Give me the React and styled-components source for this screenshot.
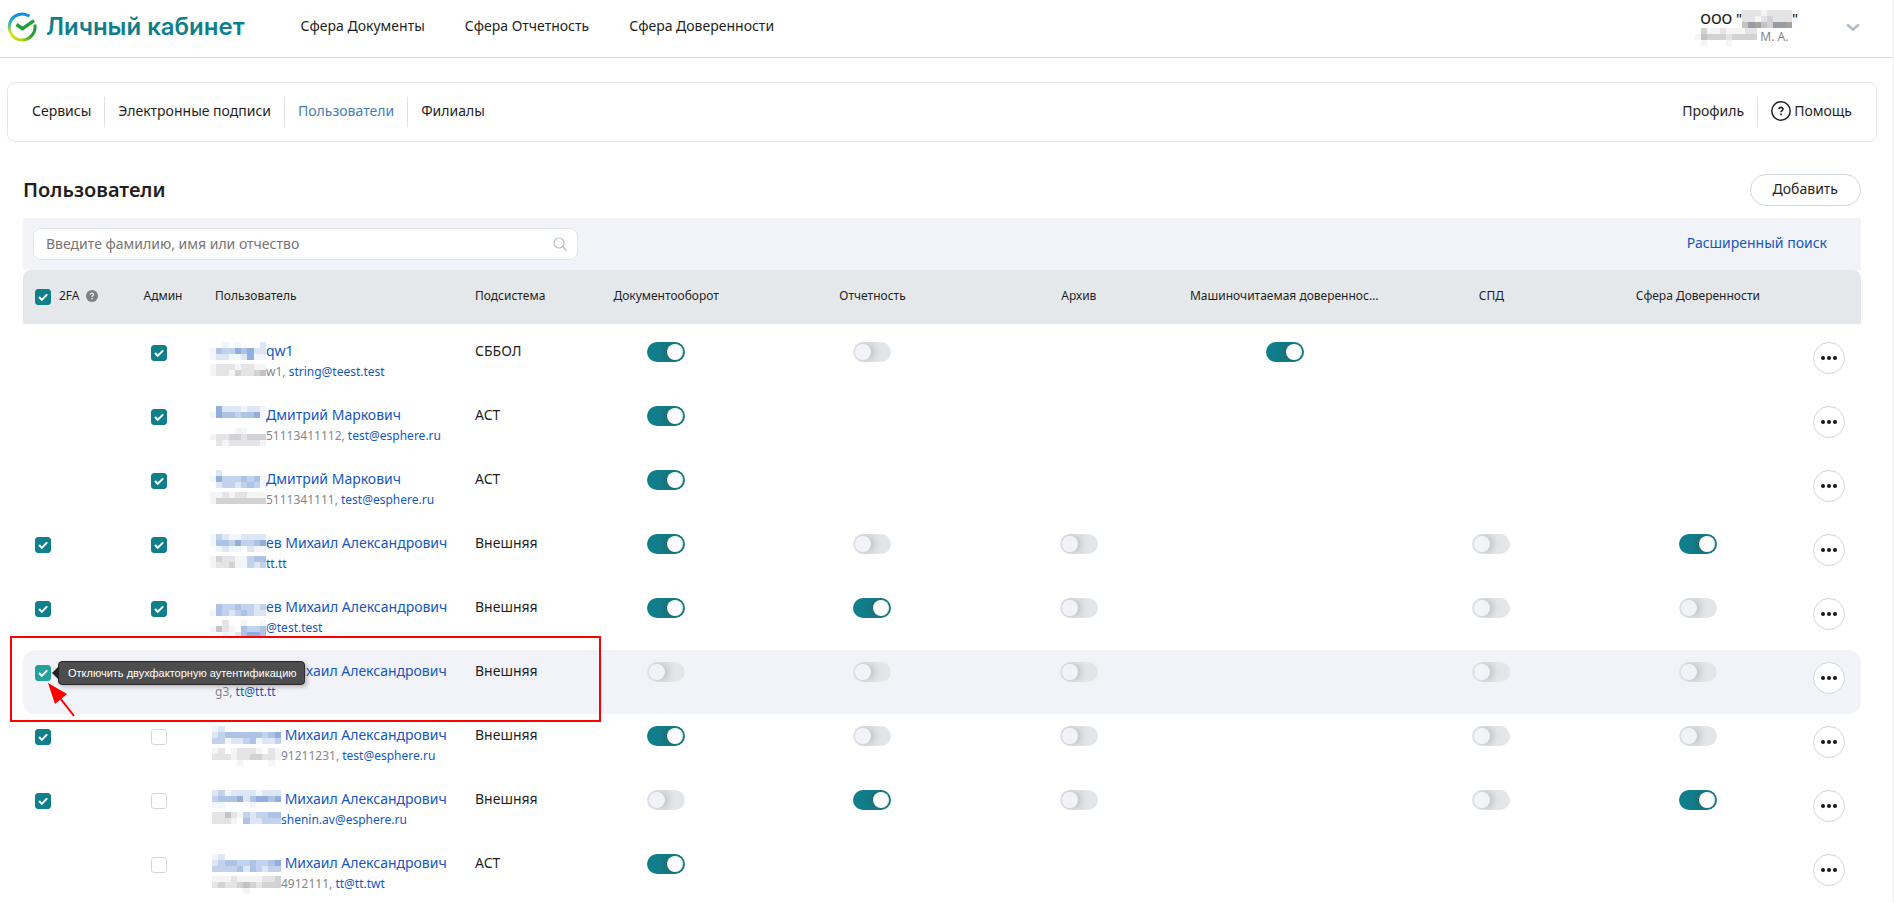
import React, { useState } from 'react';
import styled, { createGlobalStyle } from 'styled-components';

const GlobalStyle = createGlobalStyle`
  * {
    box-sizing: border-box;
  }

  body {
    margin: 0;
    color: #1f1f22;
    background: #fff;
    font-family: 'Noto Sans', 'Open Sans', sans-serif;
    font-size: 14px;
    line-height: 20px;
  }

  a {
    text-decoration: none;
  }

  button, input {
    font-family: inherit;
    font-size: inherit;
  }
`;

const Page = styled.div`
  height: 100vh;
  overflow-y: auto;
  scrollbar-width: none;
  border-right: 1px solid #f0f0f2;
`;

// HEADER

const Header = styled.header`
  display: flex;
  align-items: center;
  height: 58px;
  padding: 0 33px 4px 7px;
  border-bottom: 1px solid #d0d7dd;
`;

const Logo = styled.a`
  display: flex;
  align-items: center;
  gap: 9px;
  margin-right: 56px;
  color: #107f8c;
  font-family: Inter, sans-serif;
  font-size: 24px;
  font-weight: 600;
  line-height: 30px;
`;

const HeaderNav = styled.nav`
  display: flex;
  flex: 1;
  gap: 40px;
  padding-bottom: 2px;
`;

const HeaderLink = styled.a`
  color: #1f1f22;
`;

const Account = styled.button`
  display: flex;
  align-items: center;
  gap: 48px;
  padding: 2px 0 0;
  border: 0;
  background: none;
  color: #1f1f22;
  text-align: left;
`;

const Company = styled.div`
  padding-left: 5px;
  font-weight: 500;
  line-height: 18px;
`;

const Person = styled.div`
  color: #85878c;
  font-size: 12px;
  line-height: 18px;
`;

// SECTIONS

const Sections = styled.nav`
  display: flex;
  align-items: center;
  margin: 24px 16px 0 7px;
  padding: 14px 11px;
  border: 1px solid #e4e6e8;
  border-radius: 8px;
`;

const SectionLink = styled.a`
  display: flex;
  align-items: center;
  gap: 3px;
  height: 30px;
  padding: 0 13px 2px;
  color: ${(props) => (props.$active ? '#4480b8' : '#1f1f22')};

  & + & {
    border-left: 1px solid #dfe2e5;
  }
`;

const Spacer = styled.div`
  flex: 1;
`;

// CONTENT

const Main = styled.main`
  padding: 32px 32px 0 23px;
`;

const TitleRow = styled.div`
  display: flex;
  align-items: center;
  justify-content: space-between;
  margin-bottom: 12px;
`;

const Title = styled.h1`
  margin: 0;
  font-size: 20px;
  font-weight: 600;
  line-height: 28px;
`;

const AddButton = styled.button`
  height: 32px;
  padding: 0 22px 4px;
  border: 1px solid #d0d7dd;
  border-radius: 16px;
  background: #fff;
  color: #1f1f22;
`;

const Filters = styled.div`
  display: flex;
  align-items: center;
  justify-content: space-between;
  padding: 10px 34px 10px 10px;
  background: #f2f3f8;
`;

const SearchBox = styled.label`
  display: flex;
  align-items: center;
  width: 545px;
  height: 32px;
  padding: 0 10px 0 12px;
  border: 1px solid #e3e6e9;
  border-radius: 8px;
  background: #fff;
`;

const SearchInput = styled.input`
  flex: 1;
  padding: 0 0 2px;
  border: 0;
  outline: 0;

  &::placeholder {
    color: #757575;
  }
`;

const BlueLink = styled.a`
  color: #1358bf;
`;

const AdvancedLink = styled(BlueLink)`
  padding-bottom: 2px;
`;

// TABLE

const Table = styled.table`
  width: 100%;
  table-layout: fixed;
  border-collapse: separate;
  border-spacing: 0;
`;

const Col = styled.col`
  width: ${(props) => props.$width}px;
`;

const HeadCell = styled.th`
  height: 54px;
  padding: 0 ${(props) => (props.$center ? '8px' : '12px')} 2px;
  overflow: hidden;
  background: #e4e8eb;
  font-size: 12px;
  font-weight: 400;
  text-align: ${(props) => (props.$center ? 'center' : 'left')};
  text-overflow: ellipsis;
  white-space: nowrap;

  &:first-child {
    border-top-left-radius: 8px;
  }

  &:last-child {
    border-top-right-radius: 8px;
  }
`;

const Factor = styled.div`
  display: flex;
  align-items: center;
  gap: 6px;
`;

const TopGap = styled.tbody`
  td {
    height: 6px;
    padding: 0;
  }
`;

const Row = styled.tr`
  background: ${(props) => (props.$active ? '#f2f3f8' : 'transparent')};
`;

const Cell = styled.td`
  position: relative;
  height: 64px;
  padding: 12px;
  line-height: 18px;
  vertical-align: top;
  text-align: ${(props) => (props.$center ? 'center' : 'left')};
  white-space: nowrap;

  &:first-child {
    border-radius: 12px 0 0 12px;
  }

  &:last-child {
    border-radius: 0 12px 12px 0;
  }
`;

const Name = styled.div`
  height: 20px;
`;

const Details = styled.div`
  height: 20px;
  color: #85878c;
  font-size: 12px;
  line-height: 20px;
`;

const Box = styled.label`
  display: inline-grid;
  margin: ${(props) => (props.$head ? '2px 2px 0 0' : '3px 8px 0 0')};
  vertical-align: top;

  input, svg {
    grid-area: 1 / 1;
  }

  svg {
    pointer-events: none;
  }

  input {
    width: 16px;
    height: 16px;
    margin: 0;
    appearance: none;
    border: 1px solid #d0d7dd;
    border-radius: 3px;
    background: #fff;
  }

  input:checked {
    border-color: ${(props) => (props.$active ? '#21a19a' : '#107f8c')};
    background: ${(props) => (props.$active ? '#21a19a' : '#107f8c')};
  }
`;

const Toggle = styled.input`
  display: block;
  width: 38px;
  height: 20px;
  margin: 0 auto;
  padding: 2px;
  overflow: hidden;
  appearance: none;
  border-radius: 10px;
  background: #e2e6e9;

  &::before {
    content: '';
    display: block;
    width: 16px;
    height: 16px;
    border-radius: 50%;
    background: #f2f3f8;
    box-shadow: 3px 0 8px rgba(0, 0, 0, 0.2);
  }

  &:checked {
    background: #107f8c;
  }

  &:checked::before {
    margin-left: 18px;
    background: #fff;
    box-shadow: -3px 0 8px rgba(60, 60, 60, 0.4);
  }
`;

const MoreButton = styled.button`
  display: flex;
  align-items: center;
  justify-content: center;
  width: 32px;
  height: 32px;
  padding: 0;
  border: 1px solid #d0d7dd;
  border-radius: 50%;
  background: #fff;
`;

const Tooltip = styled.div`
  position: absolute;
  z-index: 2;
  top: 11px;
  left: 35px;
  height: 24px;
  padding: 0 7px 0 9px;
  border: 1px solid #2a2a2a;
  border-radius: 4px;
  background: #4d4d4d;
  box-shadow: 2px 2px 4px rgba(0, 0, 0, 0.25);
  color: #fff;
  font-family: 'Liberation Sans', Arial, sans-serif;
  font-size: 11px;
  line-height: 22px;

  &::before {
    content: '';
    position: absolute;
    top: 4px;
    left: -7px;
    border: 7px solid transparent;
    border-left: 0;
    border-right-color: #222;
  }
`;

const Frame = styled.div`
  position: absolute;
  z-index: 3;
  top: -14px;
  left: -13px;
  width: 591px;
  height: 86px;
  padding: 43px 34px 0;
  border: 2px solid #fe0000;
  pointer-events: none;

  svg {
    display: block;
  }
`;

const Blocks = styled.svg`
  height: 18px;
  margin-left: ${(props) => props.$shift}px;
  vertical-align: top;

  ${Details} & {
    margin-top: 2px;
  }
`;

const shades = {
  a: '#f1f5fc',
  b: '#dde6f4',
  c: '#c2d2ed',
  d: '#adc3e6',
  e: '#92aedd',
  g: '#f5f4f5',
  h: '#e4e4e6',
  i: '#d2d2d5',
  j: '#c4c2c5',
  k: '#9a9aa3',
  l: '#a8a29e',
};

// covers the private part of a name or a login
const Mosaic = ({ rows, width, shift = 0 }) => {
  const cols = rows[0].length;

  return (
    <Blocks
      $shift={shift}
      width={width}
      viewBox={`0 0 ${cols} 3`}
      preserveAspectRatio='none'
      shapeRendering='crispEdges'
      aria-hidden='true'
    >
      {rows.map((row, y) =>
        row
          .split('')
          .map((c, x) =>
            shades[c] ? (
              <rect key={`${x}-${y}`} x={x} y={y} width='1' height='1' fill={shades[c]} />
            ) : null
          )
      )}
    </Blocks>
  );
};

const CheckBox = ({ label, checked, active, head }) => {
  const [on, setOn] = useState(checked);

  return (
    <Box $active={active} $head={head}>
      <input
        type='checkbox'
        aria-label={label}
        checked={on}
        onChange={(e) => setOn(e.target.checked)}
      />
      {on && (
        <svg width='16' height='16' viewBox='0 0 16 16'>
          <path d='M4 8l2.8 2.8L12.2 5.4' fill='none' stroke='#fff' strokeWidth='2' />
        </svg>
      )}
    </Box>
  );
};

const columns = [
  'Документооборот',
  'Отчетность',
  'Архив',
  'Машиночитаемая доверенность',
  'СПД',
  'Сфера Доверенности',
];

// switches: 1 is on, 0 is off, a space leaves the cell empty
const users = [
  {
    admin: true,
    nameMask: ['..a.a...b', 'adccedebb', 'abbaabeaa'],
    name: 'qw1',
    loginMask: ['ghhhghhgg', 'ghhgihhij', '.........'],
    login: 'w1, ',
    email: 'string@teest.test',
    system: 'СББОЛ',
    switches: '10 1  ',
  },
  {
    admin: true,
    nameMask: ['.ebbbabba', 'aeddcddea', '.........'],
    name: 'Дмитрий Маркович',
    loginMask: ['....gg...', 'ghhiihiii', '.hghhhhhg'],
    login: '51113411112, ',
    email: 'test@esphere.ru',
    system: 'АСТ',
    switches: '1     ',
  },
  {
    admin: true,
    nameMask: ['.b.......', 'aecccdcda', '.bccbcdca'],
    name: 'Дмитрий Маркович',
    loginMask: ['gghghhggg', 'giiiiiiii', '.........'],
    login: '5111341111, ',
    email: 'test@esphere.ru',
    system: 'АСТ',
    switches: '1     ',
  },
  {
    factor: true,
    admin: true,
    nameMask: ['acbaabbbb', 'addceccde', '.abaa.bag'],
    name: 'ев Михаил Александрович',
    loginMask: ['gihhgacdd', 'ghhigacbc', '.........'],
    email: 'tt.tt',
    system: 'Внешняя',
    switches: '100 01',
  },
  {
    factor: true,
    admin: true,
    nameMask: ['.........', '.dccdccbc', 'adcbcdcbb'],
    name: 'ев Михаил Александрович',
    loginMask: ['..h..g..a', 'gjhg.dccd', '..g.bdeed'],
    email: '@test.test',
    system: 'Внешняя',
    switches: '110 00',
  },
  {
    factor: true,
    active: true,
    nameMask: ['...........'],
    name: ' Михаил Александрович',
    login: 'g3, ',
    email: 'tt@tt.tt',
    system: 'Внешняя',
    switches: '000 00',
  },
  {
    factor: true,
    admin: false,
    nameMask: ['ab.........', 'bcddddddcde', 'ccabbcdabbc'],
    name: ' Михаил Александрович',
    loginMask: ['gh.ghhhg.hg', 'hhhghhiihhg', '....g....g.'],
    login: '91211231, ',
    email: 'test@esphere.ru',
    system: 'Внешняя',
    switches: '100 00',
  },
  {
    factor: true,
    admin: false,
    nameMask: ['bcabbbbabbb', 'cdddebdeede', 'aa....a....'],
    name: ' Михаил Александрович',
    loginMask: ['hhjhgcbccdd', 'hhhg.dbbccc', '...........'],
    email: 'shenin.av@esphere.ru',
    system: 'Внешняя',
    switches: '010 01',
  },
  {
    admin: false,
    nameMask: ['ab.........', 'bcddccdccde', 'ccccdbdcbcc'],
    name: ' Михаил Александрович',
    loginMask: ['ggghgggghhi', 'hihhijihiii', '.....g.....'],
    login: '4912111, ',
    email: 'tt@tt.twt',
    system: 'АСТ',
    switches: '1     ',
  },
];

const maskSize = (rows) =>
  rows[0].length > 9 ? { width: 69, shift: -3 } : { width: 56, shift: -5 };

const UserRow = ({ user }) => (
  <Row $active={user.active}>
    <Cell>
      {user.factor && (
        <CheckBox label='Двухфакторная аутентификация' checked active={user.active} />
      )}
      {user.active && (
        <>
          <Tooltip role='tooltip'>Отключить двухфакторную аутентификацию</Tooltip>
          <Frame>
            <svg width='30' height='38' viewBox='0 0 30 38' aria-hidden='true'>
              <path d='M14 17l14 18' stroke='#fe0000' strokeWidth='2' />
              <path d='M2 2l19 11-12 10z' fill='#fe0000' />
            </svg>
          </Frame>
        </>
      )}
    </Cell>
    <Cell $center>
      {user.admin !== undefined && <CheckBox label='Админ' checked={user.admin} />}
    </Cell>
    <Cell>
      <Name>
        <BlueLink href='#'>
          <Mosaic rows={user.nameMask} {...maskSize(user.nameMask)} />
          {user.name}
        </BlueLink>
      </Name>
      <Details>
        {user.loginMask && <Mosaic rows={user.loginMask} {...maskSize(user.loginMask)} />}
        {user.login}
        <BlueLink href='#'>{user.email}</BlueLink>
      </Details>
    </Cell>
    <Cell>{user.system}</Cell>
    {columns.map((column, i) => (
      <Cell key={column} $center>
        {user.switches[i] !== ' ' && (
          <Toggle
            type='checkbox'
            role='switch'
            aria-label={column}
            defaultChecked={user.switches[i] === '1'}
          />
        )}
      </Cell>
    ))}
    <Cell>
      <MoreButton aria-label='Действия'>
        <svg width='16' height='4' viewBox='0 0 16 4' fill='#1a1523'>
          <circle cx='2' cy='2' r='2' />
          <circle cx='8' cy='2' r='2' />
          <circle cx='14' cy='2' r='2' />
        </svg>
      </MoreButton>
    </Cell>
  </Row>
);

const LogoIcon = () => (
  <svg width='30' height='30' viewBox='0 0 30 30' fill='none' aria-hidden='true'>
    <defs>
      <linearGradient id='left' x1='0' y1='0' x2='0' y2='1'>
        <stop offset='0' stopColor='#0d8df0' />
        <stop offset='0.35' stopColor='#2fb5b0' />
        <stop offset='0.75' stopColor='#e8e311' />
        <stop offset='1' stopColor='#b9d916' />
      </linearGradient>
      <linearGradient id='right' x1='0' y1='1' x2='1' y2='0'>
        <stop offset='0' stopColor='#a8d31b' />
        <stop offset='0.5' stopColor='#21a038' />
        <stop offset='1' stopColor='#21a038' />
      </linearGradient>
    </defs>
    <path d='M22.5 4.2A13 13 0 1 0 15 28' stroke='url(#left)' strokeWidth='3' />
    <path d='M15 28A13 13 0 0 0 27.8 12.5' stroke='url(#right)' strokeWidth='3' />
    <path d='M9.5 12.5l6 4.2L27 8.6' stroke='#21a038' strokeWidth='3.4' />
  </svg>
);

const App = () => (
  <Page>
    <GlobalStyle />
    <Header>
      <Logo href='#'>
        <LogoIcon />
        Личный кабинет
      </Logo>
      <HeaderNav>
        <HeaderLink href='#'>Сфера Документы</HeaderLink>
        <HeaderLink href='#'>Сфера Отчетность</HeaderLink>
        <HeaderLink href='#'>Сфера Доверенности</HeaderLink>
      </HeaderNav>
      <Account>
        <div>
          <Company>
            ООО "
            <Mosaic rows={['hhhghhhh', 'hhghihhh', 'jkljikkl']} width={50} />"
          </Company>
          <Person>
            <Mosaic rows={['.igghggghh', 'gjiiihiiii', '.g...g....']} width={62} /> М. А.
          </Person>
        </div>
        <svg width='14' height='9' viewBox='0 0 14 9' fill='none' aria-hidden='true'>
          <path d='M1 1.5l6 5 6-5' stroke='#b3bcc5' strokeWidth='2.6' />
        </svg>
      </Account>
    </Header>
    <Sections>
      <SectionLink href='#'>Сервисы</SectionLink>
      <SectionLink href='#'>Электронные подписи</SectionLink>
      <SectionLink href='#' $active>Пользователи</SectionLink>
      <SectionLink href='#'>Филиалы</SectionLink>
      <Spacer />
      <SectionLink href='#'>Профиль</SectionLink>
      <SectionLink href='#'>
        <svg width='20' height='20' viewBox='0 0 20 20' fill='none' aria-hidden='true'>
          <circle cx='10' cy='10' r='9.2' stroke='#1f1f22' strokeWidth='1.5' />
          <path
            d='M8 8.2c0-2.4 4-2.4 4-.1 0 1.5-2 1.5-2 3.2M10 12.6v1.6'
            stroke='#1f1f22'
            strokeWidth='1.6'
          />
        </svg>
        Помощь
      </SectionLink>
    </Sections>
    <Main>
      <TitleRow>
        <Title>Пользователи</Title>
        <AddButton>Добавить</AddButton>
      </TitleRow>
      <Filters>
        <SearchBox>
          <SearchInput
            type='text'
            aria-label='Поиск'
            placeholder='Введите фамилию, имя или отчество'
          />
          <svg width='14' height='14' viewBox='0 0 14 14' fill='none' aria-hidden='true'>
            <circle cx='6' cy='6' r='5' stroke='#b7bfc7' strokeWidth='1.2' />
            <path d='M9.6 9.6l3.8 3.8' stroke='#b7bfc7' strokeWidth='1.4' />
          </svg>
        </SearchBox>
        <AdvancedLink href='#'>Расширенный поиск</AdvancedLink>
      </Filters>
      <Table>
        <colgroup>
          <Col $width={100} />
          <Col $width={80} />
          <Col $width={260} />
          <Col $width={100} />
          {columns.map((column) => (
            <col key={column} />
          ))}
          <Col $width={60} />
        </colgroup>
        <thead>
          <tr>
            <HeadCell>
              <Factor>
                <CheckBox label='2FA' checked head />
                2FA
                <svg width='12' height='12' viewBox='0 0 12 12' aria-hidden='true'>
                  <circle cx='6' cy='6' r='6' fill='#7d7f86' />
                  <path
                    d='M4.4 4.8c0-2.2 3.2-2.2 3.2-.2 0 1.2-1.6 1.2-1.6 2.4M6 8v1.4'
                    fill='none'
                    stroke='#e4e8eb'
                    strokeWidth='1.3'
                  />
                </svg>
              </Factor>
            </HeadCell>
            <HeadCell $center>Админ</HeadCell>
            <HeadCell>Пользователь</HeadCell>
            <HeadCell>Подсистема</HeadCell>
            {columns.map((column) => (
              <HeadCell key={column} $center>
                {column}
              </HeadCell>
            ))}
            <HeadCell aria-label='Действия' />
          </tr>
        </thead>
        <TopGap>
          <tr>
            <td colSpan='11' />
          </tr>
        </TopGap>
        <tbody>
          {users.map((user, i) => (
            <UserRow key={i} user={user} />
          ))}
        </tbody>
      </Table>
    </Main>
  </Page>
);

export default App;
